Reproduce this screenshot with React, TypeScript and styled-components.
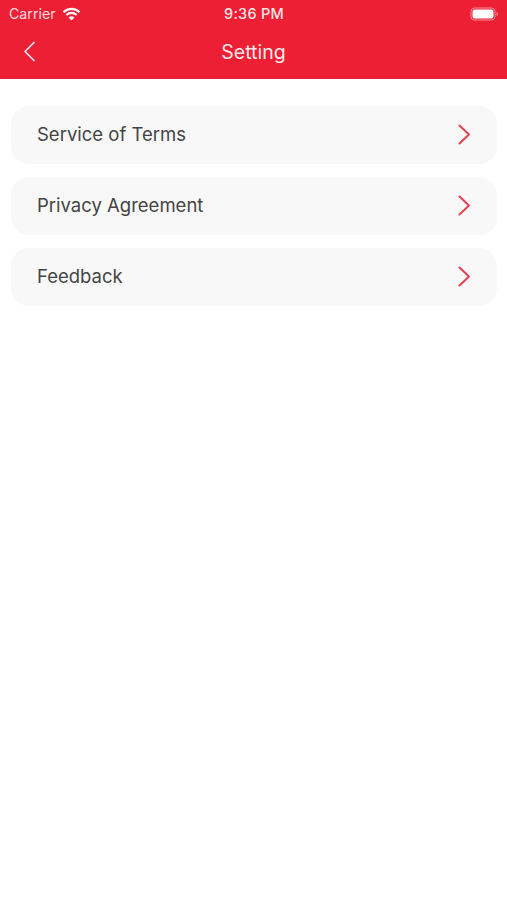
import React from 'react';
import styled, {createGlobalStyle} from 'styled-components';

const GlobalStyle = createGlobalStyle`
  html, body {
    margin: 0;
    padding: 0;
    background: #ffffff;
    font-family: Inter, "Liberation Sans", sans-serif;
  }
`;

const Page = styled.div`
  width: 507px;
  height: 900px;
  overflow: hidden;
  background: #ffffff;
`;

const Header = styled.header`
  height: 79px;
  background: #ec1f34;
  color: #ffffff;
  display: flex;
  flex-direction: column;
`;

const StatusBar = styled.div`
  height: 27px;
  padding: 0 8px 0 9px;
  display: grid;
  grid-template-columns: 1fr auto 1fr;
  align-items: center;
`;

const Carrier = styled.div`
  display: flex;
  align-items: center;
  gap: 6px;
  font-size: 14.2px;
  color: rgba(255, 255, 255, 0.85);
`;

const Clock = styled.div`
  font-size: 14.5px;
  font-weight: 500;
  letter-spacing: 0.25px;
  color: rgba(255, 255, 255, 0.9);
`;

const Battery = styled.svg`
  justify-self: end;
`;

const TitleBar = styled.div`
  flex: 1;
  padding: 0 0 2px 23px;
  position: relative;
  display: flex;
  align-items: center;
`;

const Title = styled.h1`
  position: absolute;
  left: 0;
  right: 0;
  margin: 0;
  text-align: center;
  font-size: 19.5px;
  font-weight: 400;
  color: rgba(255, 255, 255, 0.92);
`;

const List = styled.div`
  display: flex;
  flex-direction: column;
  gap: 13.5px;
  padding: 27px 10px 0 11px;
`;

const Row = styled.div`
  height: 57.5px;
  padding: 0 26px 1px 26px;
  box-sizing: border-box;
  border-radius: 18px;
  background: #f8f8f8;
  display: flex;
  align-items: center;
  justify-content: space-between;
  font-size: 18.5px;
  color: #444444;
`;

const Chevron = () => (
  <svg width="13" height="21" viewBox="0 0 13 21" fill="none">
    <path
      d="M1.5 1.5l9.5 9-9.5 9"
      stroke="#e4424f"
      strokeWidth="2"
      strokeLinecap="round"
      strokeLinejoin="round"
    />
  </svg>
);

const items = ['Service of Terms', 'Privacy Agreement', 'Feedback'];

const App: React.FC = () => (
  <Page>
    <GlobalStyle />
    <Header>
      <StatusBar>
        <Carrier>
          Carrier
          <svg width="19" height="14" viewBox="0 0 19 14" fill="none">
            <path
              d="M1.5 5.2a11.4 11.4 0 0 1 16 0M4.4 8a7.3 7.3 0 0 1 10.2 0"
              stroke="#ffffff"
              strokeWidth="2.2"
            />
            <path d="M6.6 10.4a4 4 0 0 1 5.8 0L9.5 13.4z" fill="#ffffff" />
          </svg>
        </Carrier>
        <Clock>9:36 PM</Clock>
        <Battery width="29" height="14" viewBox="0 0 29 14" fill="none">
          <rect
            x="1"
            y="1"
            width="24"
            height="12"
            rx="3.5"
            stroke="#ffffff"
            strokeOpacity="0.5"
          />
          <rect x="2.5" y="2.5" width="21" height="9" rx="2.2" fill="#ffffff" />
          <path d="M26.5 5v4c.9-.3 1.5-1.1 1.5-2s-.6-1.7-1.5-2z" fill="#ffffff" fillOpacity="0.5" />
        </Battery>
      </StatusBar>
      <TitleBar>
        <svg width="13" height="22" viewBox="0 0 13 22" fill="none">
          <path
            d="M11 1.5L2 10.5l9 9"
            stroke="#ffffff"
            strokeOpacity="0.9"
            strokeWidth="1.7"
            strokeLinecap="round"
            strokeLinejoin="round"
          />
        </svg>
        <Title>Setting</Title>
      </TitleBar>
    </Header>
    <List>
      {items.map(item => (
        <Row key={item}>
          {item}
          <Chevron />
        </Row>
      ))}
    </List>
  </Page>
);

export default App;
